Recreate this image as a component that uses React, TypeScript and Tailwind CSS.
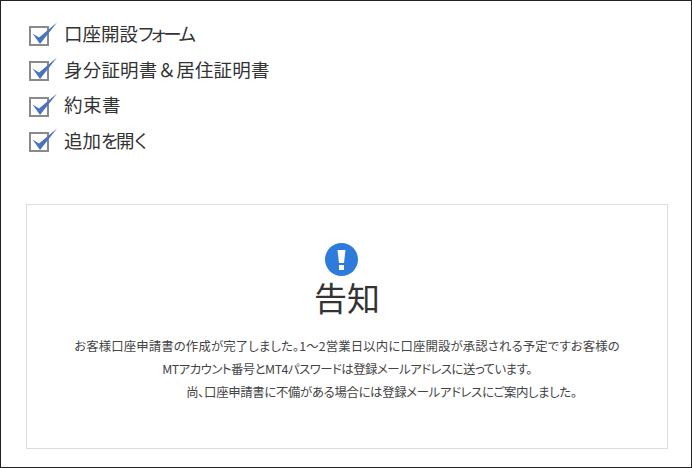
import React from 'react';

const CheckMark: React.FC = () => (
  <svg width="29" height="24" viewBox="0 0 29 24" className="shrink-0 mr-[6px]">
    <rect x="1" y="5" width="18" height="18" fill="#fff" stroke="#8a8a8a" strokeWidth="2" />
    <path d="M3.5 11.5 L10 15.5 L28 0.5 L11 22 Z" fill="#4a72bd" />
  </svg>
);

const App: React.FC = () => {
  return (
    <div className="w-[692px] h-[468px] bg-white border border-[#222] overflow-hidden text-[#333] [font-family:'Noto_Sans_CJK_JP','Liberation_Sans',sans-serif] [font-feature-settings:'palt']">
      <ul className="pl-[28px] pt-[20px] flex flex-col gap-[10px] text-[18.5px] leading-[25px]">
        <li className="flex items-center h-[25.5px]">
          <CheckMark />
          <span>口座開設<span className="tracking-[-2.3px]">フォーム</span></span>
        </li>
        <li className="flex items-center h-[25.5px]">
          <CheckMark />
          <span className="tracking-[0.2px]">身分証明書<span className="[font-feature-settings:'palt'_0]">＆</span>居住証明書</span>
        </li>
        <li className="flex items-center h-[25.5px]">
          <CheckMark />
          <span className="tracking-[0.5px]">約束書</span>
        </li>
        <li className="flex items-center h-[25.5px]">
          <CheckMark />
          <span>追加<span className="tracking-[-2px]">を</span>開<span className="tracking-[-2px]">く</span></span>
        </li>
      </ul>

      <div className="mt-[51px] ml-[25px] w-[642px] h-[245px] border border-[#ddd] flex flex-col items-center pt-[38px]">
        <svg width="33" height="33" viewBox="0 0 33 33" className="mr-[12px]">
          <circle cx="16.5" cy="16.5" r="16.5" fill="#2f7bdc" />
          <path d="M12.5 7 H20.5 L19 20 H14 Z" fill="#fff" />
          <rect x="14" y="22" width="5" height="5" fill="#fff" />
        </svg>
        <h2 className="text-[33px] leading-[44px] font-normal text-[#333] -mt-[1px]">告知</h2>
        <div className="mt-[16px] text-[12.4px] leading-[23px] text-center text-[#444]">
          <p className="tracking-[0.13px]">お客様口座申請書の作成が完了しました。1～2営業日以内に口座開設が承認される予定ですお客様の</p>
          <p className="tracking-[-0.5px]">MTアカウント番号とMT4パスワードは登録メールアドレスに送っています。</p>
          <p className="pl-[69px] tracking-[-0.33px]">尚、口座申請書に不備がある場合には登録メールアドレスにご案内しました。</p>
        </div>
      </div>
    </div>
  );
};

export default App;
